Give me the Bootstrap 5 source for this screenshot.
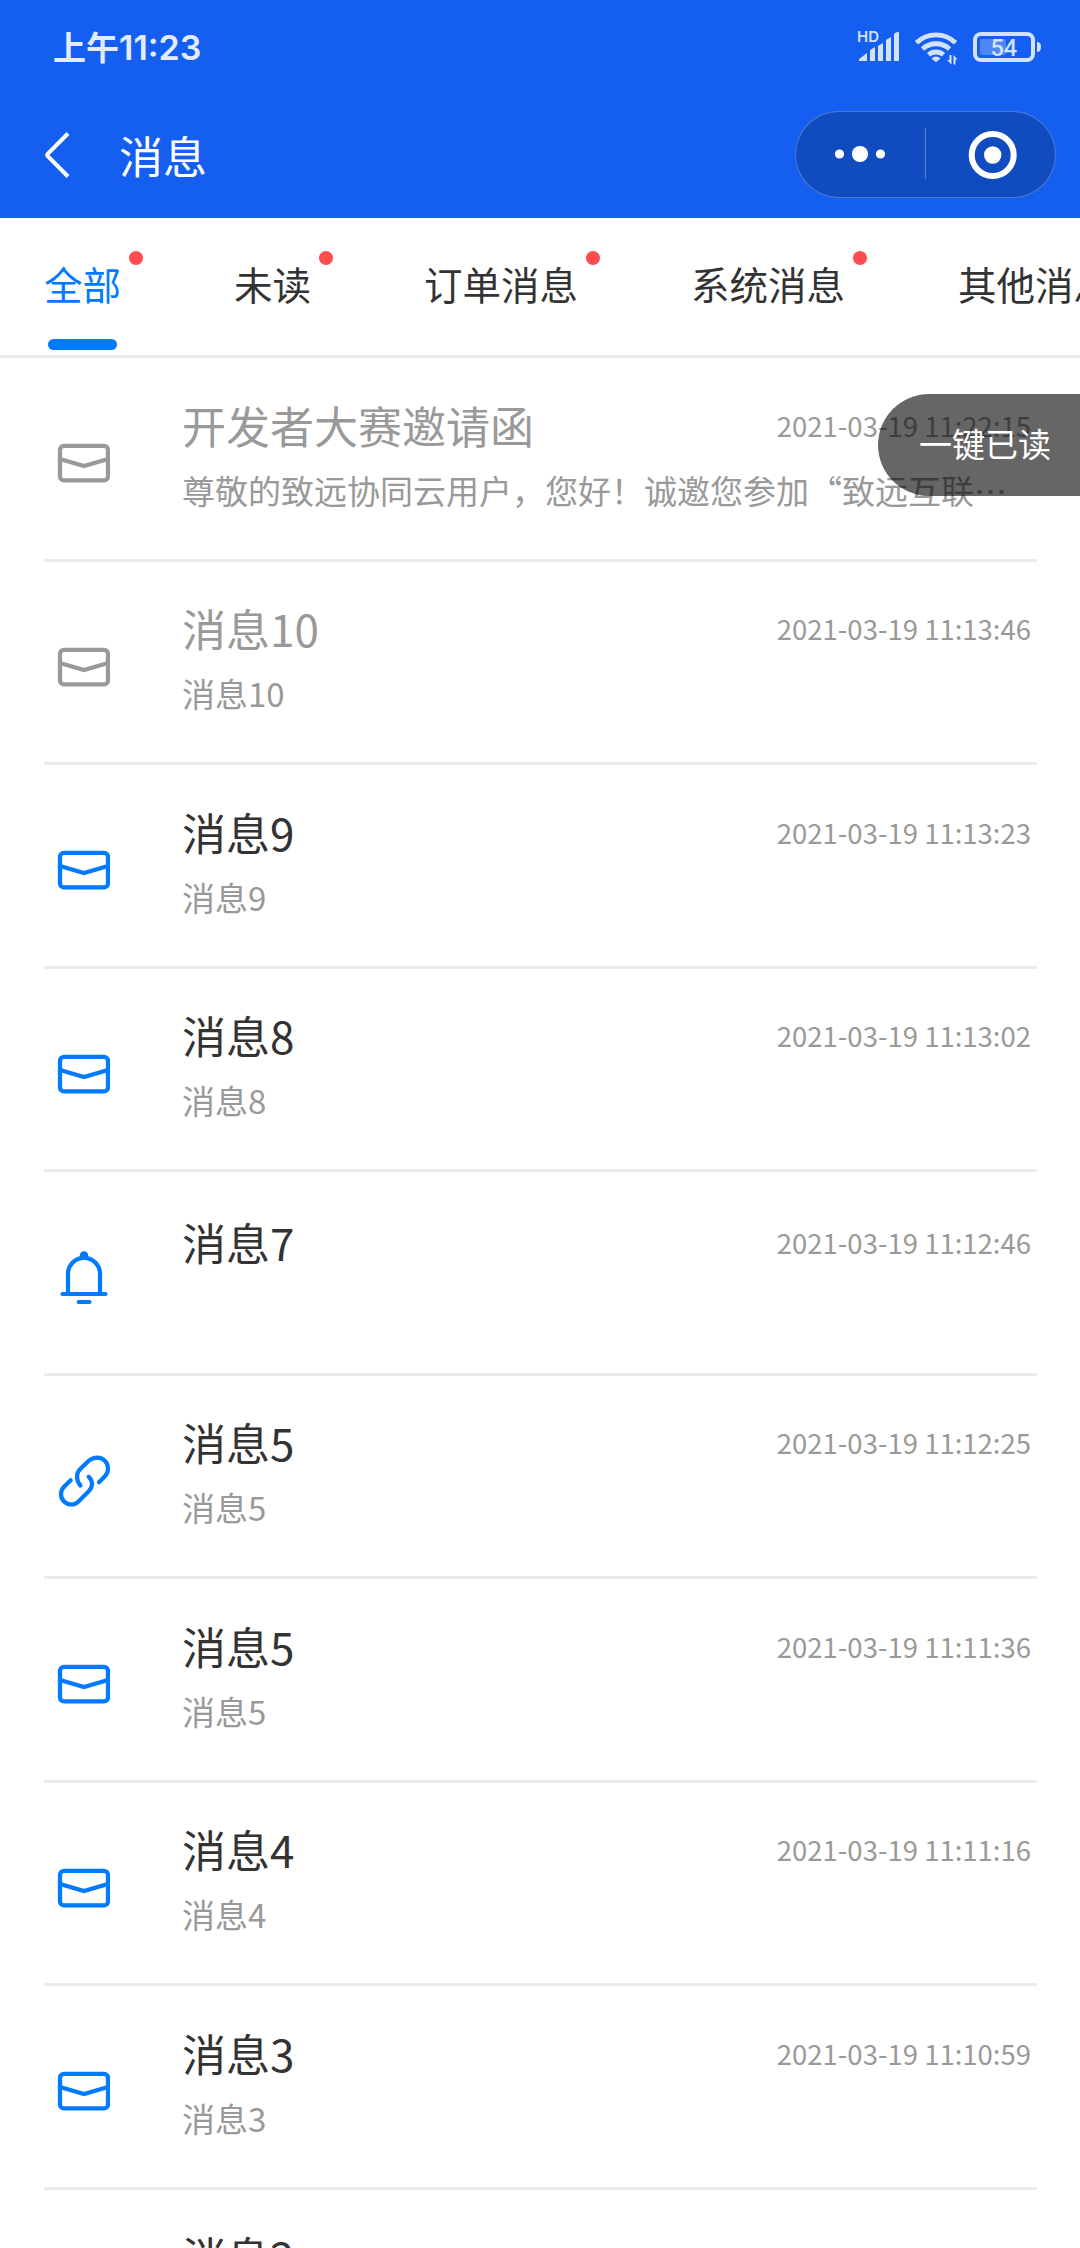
<!DOCTYPE html>
<html lang="zh-CN">
<head>
<meta charset="utf-8">
<meta name="viewport" content="width=device-width, initial-scale=1">
<title>消息</title>
<link href="https://cdn.jsdelivr.net/npm/bootstrap@5.3.0/dist/css/bootstrap.min.css" rel="stylesheet">
<style>
body{font-family:"Noto Sans CJK SC",sans-serif;color:#333;background:#fff;height:2248px;overflow:hidden}
.topbar{background:#145ff0;height:218px}
.statusbar{height:94px;padding:0 39px 0 53px}
.clock{font-size:33px;font-weight:600;color:#e3ecfd;line-height:1}
.clock-digits{font-family:Inter,sans-serif;font-size:34px}
.titlebar{height:121px;padding:0 24px 0 44px}
.page-title{font-size:44px;line-height:1;margin-left:47px}
.capsule{width:261px;height:87px;border:1px solid rgba(255,255,255,.25);background:rgba(0,0,0,.2)}
.tabs{height:140px;border-bottom:3px solid #ebebeb;padding-left:44px;gap:113px}
.tab{font-size:38.5px;line-height:1;height:137px;padding-top:46px;white-space:nowrap;color:#333;text-decoration:none}
.tab.active{color:#007aff}
.tab.active::after{content:"";position:absolute;left:4px;bottom:5px;width:69px;height:11px;border-radius:6px;background:#007aff}
.reddot{width:14px;height:14px;background:#ff4d4f;left:calc(100% + 8px);top:33px}
.messages{padding:0 43px 0 44px}
.msg{height:203.5px;border-bottom:3px solid #ebebeb}
.msg-icon{width:138px;padding:78px 0 0 6px;color:#007aff}
.msg-icon svg,.topbar svg{display:block}
.msg-body{padding:43.5px 6px 0 0;min-width:0}
.msg-title{font-size:44px;line-height:46px}
.msg-time{font-size:27.5px;line-height:46px;color:#999}
.msg-desc{font-size:33px;line-height:40px;margin-top:22px;color:#999;white-space:nowrap}
.seen .msg-icon,.seen .msg-title{color:#999}
.untexted .msg-body{padding-top:46.5px}
.read-all{right:0;top:394px;width:202px;height:102px;border-radius:51px 0 0 51px;background:rgba(0,0,0,.6);font-size:33px;line-height:1;padding:33px 0 0 41px;white-space:nowrap}
</style>
</head>
<body class="position-relative">
<svg width="0" height="0" class="position-absolute">
  <symbol id="mail" viewBox="0 0 60 54"><g fill="none" stroke="currentColor" stroke-width="4.300"><rect x="10" y="9.800" width="48" height="34.600" rx="4"/><path d="M10 23l24 7 24-7"/></g></symbol>
  <symbol id="bell" viewBox="0 0 60 60"><circle cx="34" cy="5.400" r="4.200" fill="currentColor"/><path d="M18 43V23.800a16 16 0 0 1 32 0v19.200M12.500 44h43M28.700 52h10.800" fill="none" stroke="currentColor" stroke-width="4.200" stroke-linecap="round"/></symbol>
  <symbol id="chain" viewBox="0 0 62 60"><path d="M30.500 31.500Q27 27.500 27 22.500Q27 18 30.500 14.800L38.500 7C42 4 44.500 3.600 47.300 3.600C53.500 3.600 58 8.500 58 14.800Q58 19 54.500 22.700L49 28.200M20.700 26.200L14 32.800Q11 36 11 40C11 46 15.500 50.500 21.700 50.500Q25.500 50.500 28.500 47.500L38.500 37.500Q42 34 42 30Q42 26 38.700 22.800" fill="none" stroke="currentColor" stroke-width="4.200" stroke-linecap="round"/></symbol>
</svg>

<header class="topbar text-white">
  <div class="statusbar d-flex align-items-center justify-content-between">
    <div class="clock">上午<span class="clock-digits">11:23</span></div>
    <svg width="186" height="54" viewBox="855 20 186 54" fill="#d3e1fc">
      <text x="857" y="42" font-family="Inter" font-size="15" font-weight="600">HD</text>
      <path d="M859 61v-2l8-6v8zM870 61V50l5-3v14zM878 61V46l5-3v18zM886 61V40l5-3v24zM894 61V35q0-3 5-3v29z"/>
      <g fill="none" stroke="#d3e1fc" stroke-width="4.800"><path d="M916.500 42.800a28 28 0 0 1 39 0M922.500 49a20 20 0 0 1 27 0M928.500 54.800a11.500 11.500 0 0 1 15 0"/></g>
      <path d="M931.500 58.500q4.500-4 9 0l-4.500 3.800z"/>
      <path d="M949.500 55h2v9.500l-4.500-4.500h2.500zM953.500 64.500V55l4 4.500h-2v5z"/>
      <rect x="975" y="34" width="58" height="26" rx="6" fill="none" stroke="#d3e1fc" stroke-width="4"/>
      <rect x="980" y="39" width="26" height="16" rx="2" fill="#4d87f5"/>
      <path d="M1037 42q4 0 4 5t-4 5z"/>
      <text x="990.500" y="56" font-family="Roboto" font-size="23.500" font-weight="500">54</text>
    </svg>
  </div>
  <div class="titlebar d-flex align-items-center justify-content-between">
    <div class="d-flex align-items-center">
      <svg width="28" height="48" viewBox="0 0 28 48"><path d="M24 2.500L3.500 23l0 0q-.8 1 0 2L24 45.500" fill="none" stroke="#fff" stroke-width="4"/></svg>
      <div class="page-title">消息</div>
    </div>
    <div class="capsule rounded-pill">
      <svg width="259" height="85" viewBox="796 112 259 85" fill="#fff"><circle cx="839.500" cy="154" r="4.600"/><circle cx="860" cy="154" r="8.100"/><circle cx="880.500" cy="154" r="4.600"/><path d="M925 128h1v51h-1z" opacity=".3"/><circle cx="992.700" cy="155" r="21" fill="none" stroke="#fff" stroke-width="6"/><circle cx="992.700" cy="155" r="8.700"/></svg>
    </div>
  </div>
</header>

<nav class="tabs d-flex overflow-hidden">
  <a class="tab active position-relative">全部<span class="reddot position-absolute rounded-circle"></span></a>
  <a class="tab position-relative">未读<span class="reddot position-absolute rounded-circle"></span></a>
  <a class="tab position-relative">订单消息<span class="reddot position-absolute rounded-circle"></span></a>
  <a class="tab position-relative">系统消息<span class="reddot position-absolute rounded-circle"></span></a>
  <a class="tab position-relative">其他消息</a>
</nav>

<main class="messages">
  <div class="msg seen d-flex"><div class="msg-icon flex-shrink-0"><svg width="60" height="54"><use href="#mail"/></svg></div><div class="msg-body flex-grow-1"><div class="d-flex justify-content-between"><div class="msg-title">开发者大赛邀请函</div><div class="msg-time">2021-03-19 11:22:15</div></div><div class="msg-desc">尊敬的致远协同云用户，您好！诚邀您参加“致远互联…</div></div></div>
  <div class="msg seen d-flex"><div class="msg-icon flex-shrink-0"><svg width="60" height="54"><use href="#mail"/></svg></div><div class="msg-body flex-grow-1"><div class="d-flex justify-content-between"><div class="msg-title">消息10</div><div class="msg-time">2021-03-19 11:13:46</div></div><div class="msg-desc">消息10</div></div></div>
  <div class="msg d-flex"><div class="msg-icon flex-shrink-0"><svg width="60" height="54"><use href="#mail"/></svg></div><div class="msg-body flex-grow-1"><div class="d-flex justify-content-between"><div class="msg-title">消息9</div><div class="msg-time">2021-03-19 11:13:23</div></div><div class="msg-desc">消息9</div></div></div>
  <div class="msg d-flex"><div class="msg-icon flex-shrink-0"><svg width="60" height="54"><use href="#mail"/></svg></div><div class="msg-body flex-grow-1"><div class="d-flex justify-content-between"><div class="msg-title">消息8</div><div class="msg-time">2021-03-19 11:13:02</div></div><div class="msg-desc">消息8</div></div></div>
  <div class="msg untexted d-flex"><div class="msg-icon flex-shrink-0"><svg width="60" height="60"><use href="#bell"/></svg></div><div class="msg-body flex-grow-1"><div class="d-flex justify-content-between"><div class="msg-title">消息7</div><div class="msg-time">2021-03-19 11:12:46</div></div></div></div>
  <div class="msg d-flex"><div class="msg-icon flex-shrink-0"><svg width="62" height="60"><use href="#chain"/></svg></div><div class="msg-body flex-grow-1"><div class="d-flex justify-content-between"><div class="msg-title">消息5</div><div class="msg-time">2021-03-19 11:12:25</div></div><div class="msg-desc">消息5</div></div></div>
  <div class="msg d-flex"><div class="msg-icon flex-shrink-0"><svg width="60" height="54"><use href="#mail"/></svg></div><div class="msg-body flex-grow-1"><div class="d-flex justify-content-between"><div class="msg-title">消息5</div><div class="msg-time">2021-03-19 11:11:36</div></div><div class="msg-desc">消息5</div></div></div>
  <div class="msg d-flex"><div class="msg-icon flex-shrink-0"><svg width="60" height="54"><use href="#mail"/></svg></div><div class="msg-body flex-grow-1"><div class="d-flex justify-content-between"><div class="msg-title">消息4</div><div class="msg-time">2021-03-19 11:11:16</div></div><div class="msg-desc">消息4</div></div></div>
  <div class="msg d-flex"><div class="msg-icon flex-shrink-0"><svg width="60" height="54"><use href="#mail"/></svg></div><div class="msg-body flex-grow-1"><div class="d-flex justify-content-between"><div class="msg-title">消息3</div><div class="msg-time">2021-03-19 11:10:59</div></div><div class="msg-desc">消息3</div></div></div>
  <div class="msg d-flex"><div class="msg-icon flex-shrink-0"></div><div class="msg-body flex-grow-1"><div class="msg-title">消息2</div></div></div>
</main>

<div class="read-all position-absolute text-white">一键已读</div>
<script src="https://cdn.jsdelivr.net/npm/bootstrap@5.3.0/dist/js/bootstrap.bundle.min.js"></script>
</body>
</html>
